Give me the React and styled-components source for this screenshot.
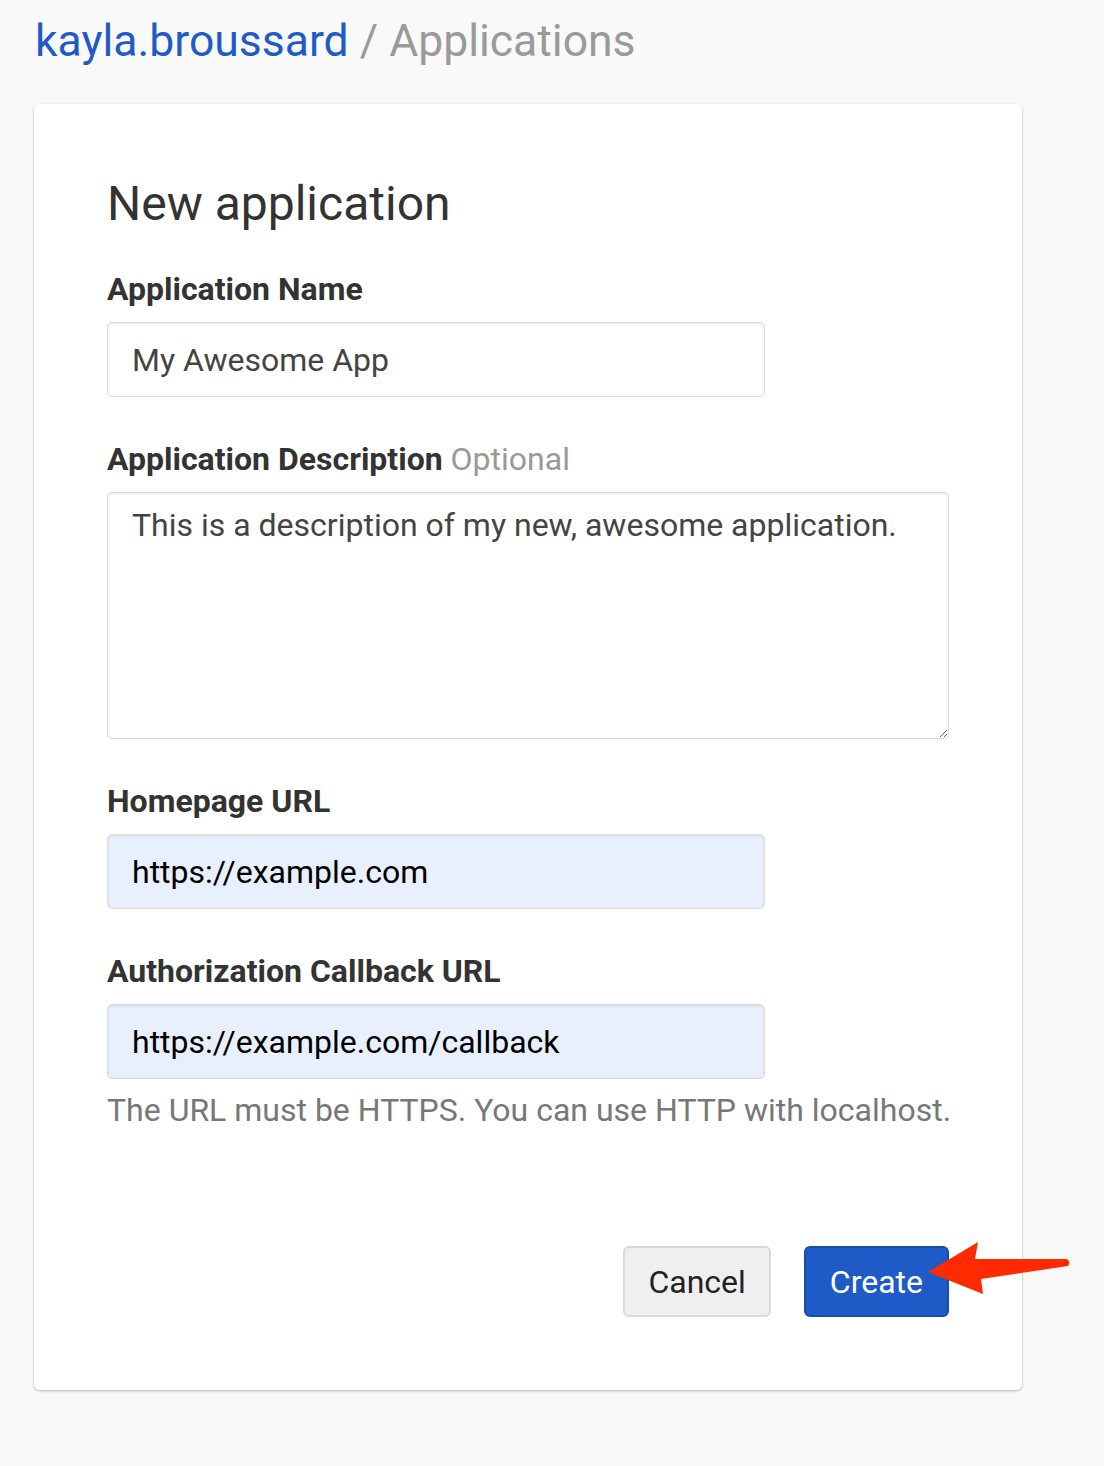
import React from 'react';
import styled, { createGlobalStyle } from 'styled-components';

const GlobalStyle = createGlobalStyle`
  html, body {
    margin: 0;
    padding: 0;
    background: #f9f9f9;
  }
  body {
    font-family: Roboto, "Liberation Sans", sans-serif;
  }
`;

const fields = [
  { label: 'Application Name', value: 'My Awesome App' },
  { label: 'Application Description', optional: true, multiline: true, value: 'This is a description of my new, awesome application.' },
  { label: 'Homepage URL', value: 'https://example.com', filled: true },
  { label: 'Authorization Callback URL', value: 'https://example.com/callback', filled: true,
    help: 'The URL must be HTTPS. You can use HTTP with localhost.' },
];

function App() {
  return (
    <Page>
      <GlobalStyle />
      <Breadcrumb>
        <Owner href="#">kayla.broussard</Owner>
        <Crumb> / Applications</Crumb>
      </Breadcrumb>

      <Card>
        <Title>New application</Title>
        <Form>
          {fields.map((f) => (
            <Field key={f.label}>
              <Label>
                {f.label}
                {f.optional && <Optional> Optional</Optional>}
              </Label>
              {f.multiline
                ? <TextArea defaultValue={f.value} />
                : <Input defaultValue={f.value} $filled={f.filled} />}
              {f.help && <Help>{f.help}</Help>}
            </Field>
          ))}
        </Form>
        <Actions>
          <Button>Cancel</Button>
          <Button $primary>Create</Button>
        </Actions>
      </Card>

      <Arrow width="150" height="60" viewBox="0 0 150 60">
        <path
          d="M2 32 L52 2 L49 19 L141 19 Q145 22 142 26 L55 39 L57 54 Z"
          fill="#ff2a00"
        />
      </Arrow>
    </Page>
  );
}

export default App;

const Page = styled.div`
  position: relative;
  padding: 15px 0 76px 34px;
  width: 1104px;
  box-sizing: border-box;
`;

const Breadcrumb = styled.div`
  font-size: 44.5px;
  line-height: 52px;
  padding-left: 1px;
  margin-bottom: 37px;
`;

const Owner = styled.a`
  color: #1f5bc6;
  text-decoration: none;
`;

const Crumb = styled.span`
  color: #9a9a9a;
`;

const Card = styled.div`
  width: 988px;
  box-sizing: border-box;
  background: #fff;
  border-radius: 6px;
  box-shadow: 0 1px 3px rgba(0, 0, 0, 0.28);
  padding: 72px 73px 73px;
`;

const Title = styled.h1`
  margin: 0 0 39px;
  font-size: 48px;
  line-height: 56px;
  font-weight: 400;
  color: #333;
`;

const Form = styled.div`
  display: flex;
  flex-direction: column;
  gap: 44px;
`;

const Field = styled.div`
  display: flex;
  flex-direction: column;
  align-items: flex-start;
`;

const Label = styled.label`
  font-size: 32px;
  line-height: 36px;
  font-weight: 700;
  color: #333;
  margin-bottom: 15px;
`;

const Optional = styled.span`
  font-weight: 400;
  color: #999;
`;

const Input = styled.input`
  box-sizing: border-box;
  width: 658px;
  height: 75px;
  padding: 0 24px;
  border: 1px solid #dcdcdc;
  border-radius: 5px;
  box-shadow: inset 0 1px 3px rgba(0, 0, 0, 0.1);
  background: ${(p) => (p.$filled ? '#e8f0fe' : '#fff')};
  color: ${(p) => (p.$filled ? '#000' : '#444')};
  font-family: Roboto, "Liberation Sans", sans-serif;
  font-size: 32px;
  outline: none;
`;

const TextArea = styled.textarea`
  box-sizing: border-box;
  width: 842px;
  height: 247px;
  padding: 13px 24px;
  border: 1px solid #dcdcdc;
  border-radius: 5px;
  box-shadow: inset 0 1px 3px rgba(0, 0, 0, 0.1);
  background: #fff;
  color: #444;
  font-family: Roboto, "Liberation Sans", sans-serif;
  font-size: 32px;
  line-height: 1.2;
  outline: none;
`;

const Help = styled.p`
  margin: 13px 0 0;
  font-size: 32px;
  line-height: 36px;
  color: #777;
  white-space: nowrap;
`;

const Actions = styled.div`
  display: flex;
  justify-content: flex-end;
  gap: 33px;
  margin-top: 118px;
`;

const Button = styled.button`
  box-sizing: border-box;
  height: 71px;
  padding: 0 ${(p) => (p.$primary ? 24 : 23)}px;
  border-radius: 6px;
  border: 2px solid ${(p) => (p.$primary ? '#1a4ea6' : '#dadada')};
  background: ${(p) => (p.$primary ? '#1f5bc6' : '#f0eff0')};
  color: ${(p) => (p.$primary ? '#fff' : '#222')};
  font-family: Roboto, "Liberation Sans", sans-serif;
  font-size: 32px;
  cursor: pointer;
`;

const Arrow = styled.svg`
  position: absolute;
  left: 926px;
  top: 1240px;
`;
